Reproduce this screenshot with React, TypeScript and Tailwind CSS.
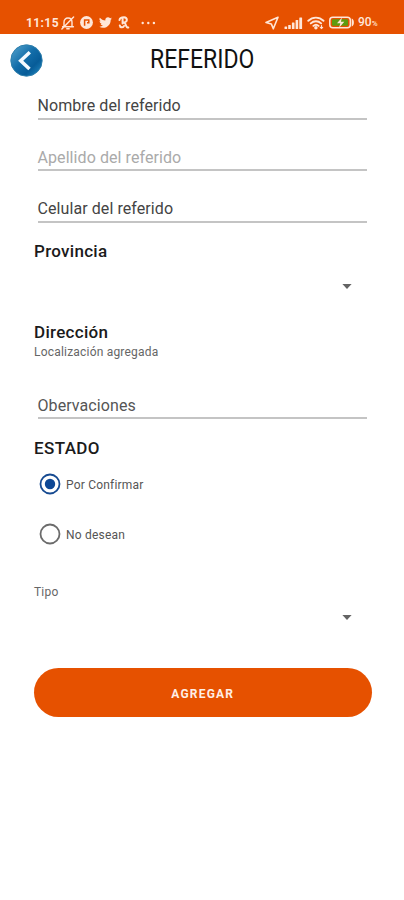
import { useState } from "react";

const ROBOTO = "font-['Roboto','Liberation_Sans',sans-serif]";

function StatusBar() {
  return (
    <header className="flex h-[34px] items-end bg-[#e65100] pb-[4px] pl-[26px] pr-[25px] text-[#ffe6d8]">
      <div className="flex h-[15px] items-center">
        <span className="w-[34px] whitespace-nowrap pt-[1px] text-[12px] font-bold leading-[15px] tracking-[0.4px]">
          11:15
        </span>
        {/* muted bell */}
        <svg className="ml-[1px] h-[14px] w-[14px]" viewBox="0 0 14 14" fill="none" stroke="currentColor" strokeWidth="1.4" strokeLinecap="round" strokeLinejoin="round">
          <path d="M3 10.5V6.2C3 3.7 4.6 2 7 2s4 1.7 4 4.2v4.3M1.6 10.7h10.8M5.8 12.8h2.4M12.6.9.9 13.1" />
        </svg>
        {/* round app badge */}
        <svg className="ml-[5px] h-[13px] w-[13px]" viewBox="0 0 13 13">
          <circle cx="6.5" cy="6.5" r="6.4" fill="currentColor" />
          <path d="M4.6 9.800V3.900h4.200v2.800H7" fill="none" stroke="#e65100" strokeWidth="1.5" />
        </svg>
        <svg className="ml-[6px] h-[13px] w-[13px]" viewBox="0 0 24 24" fill="currentColor">
          <path d="M23.95 4.57a10 10 0 0 1-2.82.78 4.96 4.96 0 0 0 2.16-2.73c-.95.56-2 .96-3.13 1.19a4.92 4.92 0 0 0-8.38 4.48C7.69 8.1 4.07 6.13 1.64 3.16a4.92 4.92 0 0 0 1.52 6.57 4.9 4.9 0 0 1-2.23-.61v.06a4.92 4.92 0 0 0 3.95 4.83 5 5 0 0 1-2.21.08 4.94 4.94 0 0 0 4.6 3.42A9.87 9.87 0 0 1 0 19.54a13.99 13.99 0 0 0 7.55 2.21c9.05 0 14-7.5 14-13.98 0-.21 0-.42-.02-.63a9.94 9.94 0 0 0 2.42-2.57z" />
        </svg>
        {/* looped app mark */}
        <svg className="ml-[6px] h-[13px] w-[12px]" viewBox="0 0 12 13" fill="none" stroke="currentColor" strokeWidth="2" strokeLinecap="round" strokeLinejoin="round">
          <path d="M1.500 4C1.800 1.600 4 1.200 6 1.200c3.600.2 3.800 4.600.3 5.200L4.500 7M4.600 3.200v4.300M1.800 9.400c.2 2.400 3.500 2.600 4.200.6M6.300 6.700c2.200 1 1 5.200 4 4.900" />
        </svg>
        <svg className="ml-[11px] h-[4px] w-[15px]" viewBox="0 0 15 4" fill="currentColor">
          <circle cx="1.7" cy="2" r="1.2" />
          <circle cx="7.3" cy="2" r="1.2" />
          <circle cx="12.9" cy="2" r="1.2" />
        </svg>
      </div>

      <div className="ml-auto flex h-[15px] items-center">
        <svg className="h-[14px] w-[14px]" viewBox="0 0 14 14" fill="none" stroke="currentColor" strokeWidth="1.6" strokeLinejoin="round">
          <path d="M13 1.2 1 6.5l5.3 1.4 2 4.9z" />
        </svg>
        <svg className="ml-[5px] h-[12px] w-[19px]" viewBox="0 0 19 12" fill="currentColor">
          <rect x="0.5" y="9.5" width="2.6" height="2.5" rx=".5" />
          <rect x="4.2" y="8" width="2.6" height="4" rx=".5" />
          <rect x="7.9" y="5.5" width="2.6" height="6.5" rx=".5" />
          <rect x="11.6" y="3" width="2.6" height="9" rx=".5" />
          <rect x="15.3" y="0.5" width="2.8" height="11.5" rx=".5" />
        </svg>
        <svg className="ml-[4px] h-[14px] w-[18px]" viewBox="0 0 18 14" fill="none" stroke="currentColor" strokeWidth="1.9" strokeLinecap="round">
          <path d="M1.3 4.8c4.4-4.2 10.8-4.2 15.2 0M3.8 7.4c3-2.9 7.3-2.9 10.3 0M6.4 9.9c1.6-1.5 3.6-1.5 5.2 0" />
          <circle cx="8.9" cy="11.8" r=".8" fill="currentColor" />
          <path d="M14.5 9.5v3M13.3 11.3l1.2 1.2 1.2-1.2" strokeWidth="1.1" />
        </svg>
        {/* charging battery */}
        <svg className="ml-[4px] h-[13px] w-[26px]" viewBox="0 0 26 13">
          <rect x="0.8" y="1.3" width="20.5" height="10.4" rx="3" fill="none" stroke="currentColor" strokeWidth="1.5" />
          <rect x="3" y="3.3" width="16" height="6.4" rx="1" fill="#5d9c10" />
          <path d="M22.7 2.5c2.9.5 2.9 7.5 0 8z" fill="currentColor" />
          <path d="m13 1.5-5 5.8h3.3l-1.2 4.5 5.2-6h-3.4z" fill="currentColor" />
        </svg>
        <span className="ml-[3px] flex w-[21px] items-baseline pt-[1px] text-[12px] font-medium leading-[15px]">
          90<span className="text-[8px]">%</span>
        </span>
      </div>
    </header>
  );
}

function BackButton() {
  return (
    <button type="button" aria-label="Volver" className="mt-[1px] h-[33px] w-[33px]">
      <svg viewBox="0 0 33 33" className="h-full w-full">
        <defs>
          <linearGradient id="ball" x1="0" y1="0" x2="1" y2="1">
            <stop offset="0" stopColor="#58a6cf" />
            <stop offset=".45" stopColor="#126da9" />
            <stop offset=".7" stopColor="#075c98" />
            <stop offset="1" stopColor="#258fc7" />
          </linearGradient>
        </defs>
        <circle cx="16.5" cy="16.5" r="15.7" fill="url(#ball)" stroke="#2f7fac" />
        <path d="M19.8 8.3 10.7 16.7l8.8 8.3" fill="none" stroke="#f4faff" strokeWidth="3.5" />
      </svg>
    </button>
  );
}

function Field({ label, className = "" }: { label: string; className?: string }) {
  return (
    <div className="ml-[3.5px] mr-[3px] flex h-[51.5px] items-end border-b-2 border-[#c4c4c4] pb-[1.5px]">
      <span className={`whitespace-nowrap text-[16px] leading-[20px] tracking-[0.08px] ${className}`}>{label}</span>
    </div>
  );
}

function Caret() {
  return (
    <svg className="h-[5px] w-[10px]" viewBox="0 0 10 5" fill="#646464">
      <path d="M.4 0h9.2L5 5z" />
    </svg>
  );
}

function Radio({ label, checked, onSelect }: { label: string; checked: boolean; onSelect: () => void }) {
  return (
    <button type="button" role="radio" aria-checked={checked} onClick={onSelect} className="flex h-[22px] items-center pl-[5px]">
      <svg className="h-[22px] w-[22px]" viewBox="0 0 22 22">
        <circle cx="11" cy="11" r="9.5" fill="none" stroke={checked ? "#164a91" : "#6b6b6b"} strokeWidth="1.8" />
        {checked && <circle cx="11" cy="11" r="5.2" fill="#0d4795" />}
      </svg>
      <span className="ml-[5px] pt-[2px] text-[12px] leading-[16px] tracking-[0.2px] text-[#555]">{label}</span>
    </button>
  );
}

export default function App() {
  const [estado, setEstado] = useState("Por Confirmar");

  return (
    <div className={`flex h-[900px] w-[404px] flex-col overflow-hidden bg-white ${ROBOTO}`}>
      <StatusBar />

      <div className="flex h-[51px] items-center pl-[9.5px]">
        <BackButton />
        <h1 className="-mt-[2px] ml-[107.5px] origin-left scale-x-[0.885] whitespace-nowrap text-[26px] leading-[30px] text-[#111]">
          REFERIDO
        </h1>
      </div>

      <main className="flex flex-col px-[34px]">
        <div className="-mt-[17px] flex flex-col">
          <Field label="Nombre del referido" className="text-[#444]" />
          <Field label="Apellido del referido" className="text-[#aaa]" />
          <Field label="Celular del referido" className="text-[#444]" />
        </div>

        <h2 className="mt-[17.5px] text-[17px] font-medium leading-[22px] tracking-[0.3px] text-[#1b1b1b]">Provincia</h2>
        <div className="flex h-[49px] items-center justify-end pr-[18px]">
          <Caret />
        </div>

        <h2 className="mt-[10px] text-[17px] font-medium leading-[22px] tracking-[0.3px] text-[#1b1b1b]">Dirección</h2>
        <p className="text-[12px] leading-[18px] tracking-[0.2px] text-[#666]">Localización agregada</p>

        <div className="mt-[6.5px]">
          <Field label="Obervaciones" className="text-[#555]" />
        </div>

        <h2 className="mt-[18px] text-[17px] font-medium leading-[22px] tracking-[0.4px] text-[#1b1b1b]">ESTADO</h2>
        <div role="radiogroup" className="mt-[14px] flex flex-col gap-[27.5px]">
          {["Por Confirmar", "No desean"].map((item) => (
            <Radio key={item} label={item} checked={estado === item} onSelect={() => setEstado(item)} />
          ))}
        </div>

        <p className="mt-[38.5px] text-[12px] leading-[18px] tracking-[0.2px] text-[#666]">Tipo</p>
        <div className="flex h-[32px] items-center justify-end pr-[18px]">
          <Caret />
        </div>

        <button
          type="button"
          className="-ml-[0.5px] -mr-[2px] mt-[35px] h-[49px] rounded-full bg-[#e65100] pt-[2px] text-[12px] font-bold tracking-[1.2px] text-[#ffeee5]"
        >
          AGREGAR
        </button>
      </main>
    </div>
  );
}
